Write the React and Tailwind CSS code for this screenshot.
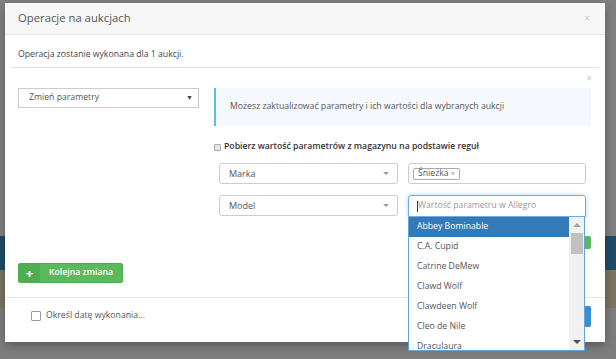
import React from 'react';

const options = [
  'Abbey Bominable',
  'C.A. Cupid',
  'Catrine DeMew',
  'Clawd Wolf',
  'Clawdeen Wolf',
  'Cleo de Nile',
  'Draculaura',
];

const SmallCaret = () => (
  <span className="w-0 h-0 border-l-[3px] border-r-[3px] border-t-[3px] border-l-transparent border-r-transparent border-t-[#999]" />
);

const ParamSelect = ({ label }) => (
  <div className="w-[179px] h-[21px] border border-[#ccc] rounded-[3px] bg-white flex items-center justify-between pl-[9px] pr-[8px]">
    <span className="text-[9px] text-[#555]">{label}</span>
    <SmallCaret />
  </div>
);

const App = () => {
  return (
    <div className="w-[616px] h-[359px] relative overflow-hidden bg-[#808080] font-['Open_Sans',sans-serif]">
      {/* page behind the overlay */}
      <div className="flex flex-col h-full">
        <div className="h-[236px] bg-[#808080]" />
        <div className="h-[34px] bg-[#1f4b67]" />
        <div className="h-[38px] bg-[#7a7461]" />
        <div className="flex-1 bg-[#7d7d7d]" />
      </div>

      {/* modal */}
      <div className="absolute left-[5px] top-[3px] w-[600px] h-[339px] bg-white shadow-[0_3px_9px_rgba(0,0,0,0.3)] flex flex-col">
        {/* header */}
        <div className="h-[32px] shrink-0 bg-[#f7f7f7] border-b border-[#e5e5e5] flex items-center justify-between pl-[13px] pr-[15px]">
          <span className="text-[11.3px] text-[#555]">Operacje na aukcjach</span>
          <span className="text-[10px] text-[#c8c8c8]">×</span>
        </div>

        {/* info */}
        <div className="h-[32px] shrink-0 pl-[13px] pt-[13px] leading-[12px] text-[8.7px] text-[#444]">
          Operacja zostanie wykonana dla 1 aukcji.
        </div>
        <div className="ml-[5px] mr-[6px] border-t border-[#e5e5e5]" />

        {/* changes */}
        <div className="flex-1 flex flex-col px-[13px]">
          <div className="h-[20px] flex items-center justify-end">
            <span className="text-[10px] text-[#c8c8c8]">×</span>
          </div>
          <div className="flex gap-[15px]">
            <div className="w-[181px] h-[20px] border border-[#ccc] flex items-center justify-between pl-[10px] pr-[5px]">
              <span className="text-[8.7px] text-[#555]">Zmień parametry</span>
              <span className="text-[7px] text-[#444]">▼</span>
            </div>

            <div className="w-[377px] flex flex-col">
              <div className="h-[38px] border-l-2 border-[#5bc0de] bg-[#f5f9fd] flex items-center pl-[14px]">
                <span className="text-[8.7px] text-[#555]">Możesz zaktualizować parametry i ich wartości dla wybranych aukcji</span>
              </div>

              <div className="mt-[15px] h-[12px] flex items-center gap-[3px]">
                <span className="w-[7px] h-[7px] border border-[#aaa] bg-[#e6e6e6] rounded-[1px]" />
                <span className="text-[8.7px] font-semibold text-[#333]">Pobierz wartość parametrów z magazynu na podstawie reguł</span>
              </div>

              <div className="mt-[10px] pl-[5px] flex gap-[10px]">
                <ParamSelect label="Marka" />
                <div className="w-[178px] h-[21px] border border-[#ccc] rounded-[3px] bg-white flex items-center pl-[4px]">
                  <span className="h-[12px] border border-[#aaa] rounded-[2px] bg-white flex items-center gap-[2px] px-[4px] text-[8.7px] text-[#555] leading-none">
                    Śnieżka <span className="text-[7px] text-[#888]">×</span>
                  </span>
                </div>
              </div>

              <div className="mt-[11px] pl-[5px] flex gap-[10px]">
                <ParamSelect label="Model" />
                <div className="relative w-[178px]">
                  <div className="h-[22px] border border-[#66afe9] rounded-t-[3px] bg-white flex items-center pl-[8px] shadow-[0_0_4px_rgba(102,175,233,0.5)]">
                    <span className="w-px h-[11px] bg-[#333]" />
                    <span className="text-[8.7px] text-[#999]">Wartość parametru w Allegro</span>
                  </div>
                  {/* dropdown list */}
                  <div className="absolute left-0 top-full w-[177px] h-[134px] border border-t-0 border-[#5fa4dc] bg-white flex z-10">
                    <div className="flex-1 overflow-hidden">
                      {options.map((o, i) => (
                        <div
                          key={o}
                          className={`h-[20px] flex items-center pl-[8px] text-[8.7px] ${
                            i === 0 ? 'bg-[#337ab7] text-white' : 'text-[#555]'
                          }`}
                        >
                          {o}
                        </div>
                      ))}
                    </div>
                    <div className="w-[15px] bg-[#f1f1f1] flex flex-col items-center">
                      <div className="h-[16px] flex items-center justify-center">
                        <span className="w-0 h-0 border-l-[4px] border-r-[4px] border-b-[4px] border-l-transparent border-r-transparent border-b-[#a3a3a3]" />
                      </div>
                      <div className="w-[12px] h-[21px] bg-[#c1c1c1]" />
                      <div className="flex-1" />
                      <div className="h-[16px] flex items-center justify-center">
                        <span className="w-0 h-0 border-l-[4px] border-r-[4px] border-t-[4px] border-l-transparent border-r-transparent border-t-[#505050]" />
                      </div>
                    </div>
                  </div>
                </div>
              </div>

              <div className="mt-[19px] flex justify-end">
                <div className="w-[60px] h-[13px] bg-[#5cb85c] rounded-[2px]" />
              </div>
            </div>
          </div>

          <div className="mt-[14px]">
            <button className="h-[20px] flex items-stretch border border-[#4cae4c] rounded-[2px] bg-[#5cb85c] text-white overflow-hidden">
              <span className="w-[21px] bg-[#4fae4f] flex items-center justify-center text-[13px] font-bold leading-none">+</span>
              <span className="px-[9px] flex items-center text-[8.7px] font-semibold">Kolejna zmiana</span>
            </button>
          </div>
        </div>

        {/* footer */}
        <div className="h-[45px] shrink-0 border-t border-[#e5e5e5] flex items-start justify-between pt-[8px] pl-[26px] pr-[14px]">
          <div className="mt-[5px] h-[10px] flex items-center gap-[5px]">
            <span className="w-[10px] h-[10px] border border-[#999] rounded-[1px] bg-white" />
            <span className="text-[8.7px] text-[#555]">Określ datę wykonania...</span>
          </div>
          <div className="w-[80px] h-[21px] bg-[#3a8fd0] rounded-[2px]" />
        </div>
      </div>
    </div>
  );
};

export default App;
